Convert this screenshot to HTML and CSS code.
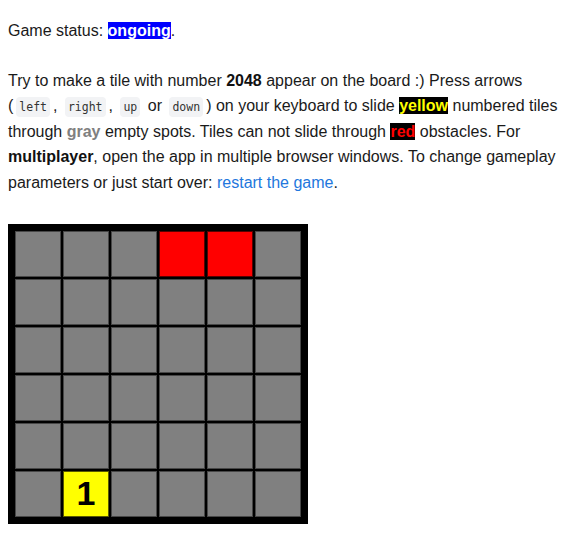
FILE: index.html
```html
<!DOCTYPE html>
<html>
<head>
<meta charset="utf-8">
<link rel="stylesheet" href="styles.css">
</head>
<body>
<div class="page">
  <p class="status">Game status: <span class="hl-ongoing">ongoing</span>.</p>
  <p class="intro">Try to make a tile with number <b>2048</b> appear on the board :) Press arrows (<code>left</code>, <code>right</code>, <code>up</code> or <code>down</code>) on your keyboard to slide <span class="hl-yellow">yellow</span> numbered tiles through <span class="hl-gray">gray</span> empty spots. Tiles can not slide through <span class="hl-red">red</span> obstacles. For <b>multiplayer</b>, open the app in multiple browser windows. To change gameplay parameters or just start over: <a class="link" href="#">restart the game</a>.</p>
  <div class="board">
    <div class="tile"></div><div class="tile"></div><div class="tile"></div><div class="tile red"></div><div class="tile red"></div><div class="tile"></div>
    <div class="tile"></div><div class="tile"></div><div class="tile"></div><div class="tile"></div><div class="tile"></div><div class="tile"></div>
    <div class="tile"></div><div class="tile"></div><div class="tile"></div><div class="tile"></div><div class="tile"></div><div class="tile"></div>
    <div class="tile"></div><div class="tile"></div><div class="tile"></div><div class="tile"></div><div class="tile"></div><div class="tile"></div>
    <div class="tile"></div><div class="tile"></div><div class="tile"></div><div class="tile"></div><div class="tile"></div><div class="tile"></div>
    <div class="tile"></div><div class="tile yellow">1</div><div class="tile"></div><div class="tile"></div><div class="tile"></div><div class="tile"></div>
  </div>
</div>
</body>
</html>
```
FILE: styles.css
```css
html, body {
  margin: 0;
  padding: 0;
  background: #fff;
}
body {
  font-family: "Liberation Sans", Arial, sans-serif;
  font-size: 16px;
  line-height: 25.6px;
  color: #1a1a1a;
}
.page {
  padding: 18px 8px 8px 8px;
}
p {
  margin: 0 0 24px 0;
}
.intro {
  margin-bottom: 28px;
}
b {
  font-weight: bold;
  color: #111;
}
.hl-ongoing {
  font-weight: bold;
  color: #fff;
  background: #0000ff;
}
.hl-yellow {
  font-weight: bold;
  color: #ffff00;
  background: #000;
}
.hl-red {
  font-weight: bold;
  color: #ff0000;
  background: #000;
}
.hl-gray {
  font-weight: bold;
  color: #808080;
}
code {
  font-family: "DejaVu Sans Mono", "Liberation Mono", monospace;
  font-size: 11.5px;
  line-height: 1;
  background: #f2f3f5;
  color: #333;
  padding: 3px 3px;
  margin: 0 3px;
  border-radius: 4px;
}
.link {
  color: #2277dd;
  text-decoration: none;
}
.board {
  display: grid;
  grid-template-columns: repeat(6, 46px);
  grid-auto-rows: 46px;
  gap: 2px;
  padding: 7px;
  width: 286px;
  background: #000;
}
.tile {
  box-sizing: border-box;
  background: #808080;
  border: 1px solid #474747;
  display: flex;
  align-items: center;
  justify-content: center;
  font-family: "Liberation Sans", Arial, sans-serif;
  font-weight: bold;
  font-size: 34px;
  color: #000;
}
.tile.red {
  background: #ff0000;
  border-color: #5a0000;
}
.tile.yellow {
  background: #ffff00;
  border-color: #5a5a00;
}
```
